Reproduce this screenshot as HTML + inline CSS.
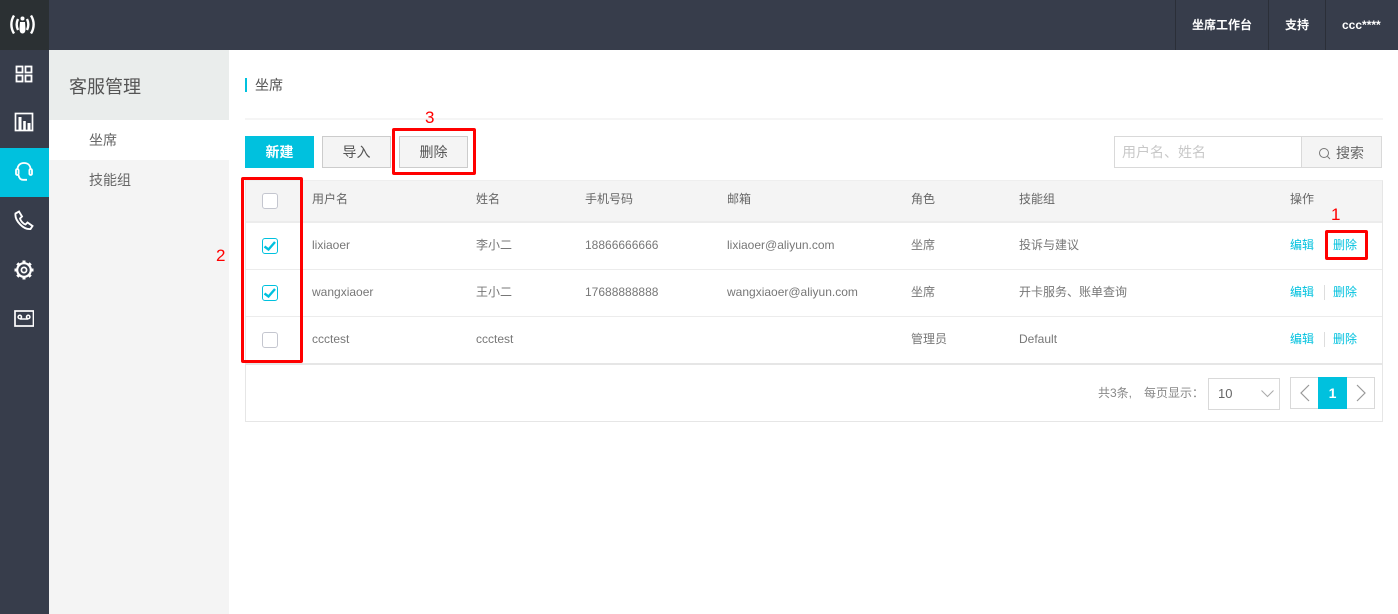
<!DOCTYPE html>
<html lang="zh">
<head>
<meta charset="utf-8">
<title>坐席</title>
<style>
html,body{margin:0;padding:0;width:1398px;height:614px;overflow:hidden;background:#fff}
body{font-family:"Liberation Sans","Noto Sans CJK SC",sans-serif;font-size:12px;color:#666;position:relative}
.a{position:absolute;box-sizing:border-box}
.t{position:absolute;white-space:nowrap;line-height:16px}
.cb{position:absolute;left:262px;width:16px;height:16px;border:1px solid #c4c6cf;border-radius:3px;background:#fff;box-sizing:border-box}
.cb.on{border-color:#00c1de}
.cb svg{position:absolute;left:0;top:0}
.lnk{color:#00c1de}
.red{position:absolute;box-sizing:border-box;border:3px solid #f00;border-radius:2px}
.num{position:absolute;color:#f00;font-size:17px;line-height:18px}
svg{display:block}
</style>
</head>
<body>
<!-- top bar -->
<div class="a" style="left:0;top:0;width:1398px;height:50px;background:#373d4b"></div>
<div class="a" style="left:0;top:0;width:49px;height:50px;background:#2b3033"></div>
<svg class="a" style="left:9px;top:13px" width="27" height="23" viewBox="0 0 27 23" fill="none" stroke="#fff" stroke-width="2.400">
<path d="M5 2.500C1.500 8 1.500 15 5 20.500M22 2.500C25.500 8 25.500 15 22 20.500"/>
<path d="M9 6C7.300 9.500 7.300 13.500 9 17M18 6C19.700 9.500 19.700 13.500 18 17"/>
<circle cx="13.500" cy="5.500" r="2" fill="#fff" stroke="none"/>
<path d="M11 9H16L16.500 16C16.500 18.500 15.500 20.500 13.500 20.500C11.500 20.500 10.500 18.500 10.500 16Z" fill="#fff" stroke="none"/>
</svg>
<div class="a" style="left:1175px;top:0;width:1px;height:50px;background:#2b2f38"></div>
<div class="a" style="left:1268px;top:0;width:1px;height:50px;background:#2b2f38"></div>
<div class="a" style="left:1325px;top:0;width:1px;height:50px;background:#2b2f38"></div>
<div class="t" style="left:1192px;top:17px;color:#fff;font-weight:700">坐席工作台</div>
<div class="t" style="left:1285px;top:17px;color:#fff;font-weight:700">支持</div>
<div class="t" style="left:1342px;top:17px;color:#fff;font-weight:700">ccc****</div>

<!-- icon rail -->
<div class="a" style="left:0;top:50px;width:49px;height:564px;background:#373d4b"></div>
<div class="a" style="left:0;top:148px;width:49px;height:49px;background:#00c1de"></div>
<svg class="a" style="left:15px;top:65px" width="18" height="18" viewBox="0 0 18 18" fill="none" stroke="#fff" stroke-width="1.800">
<rect x="1.500" y="1.500" width="6" height="6"/><rect x="10.500" y="1.500" width="6" height="6"/><rect x="1.500" y="10.500" width="6" height="6"/><rect x="10.500" y="10.500" width="6" height="6"/>
</svg>
<svg class="a" style="left:14px;top:112px" width="20" height="20" viewBox="0 0 20 20" fill="none" stroke="#fff">
<rect x="1.500" y="1.500" width="17" height="17" stroke-width="1.700"/>
<path d="M6 5V18" stroke-width="3"/><path d="M10.500 9V18" stroke-width="2.600"/><path d="M15 11V18" stroke-width="3"/>
</svg>
<svg class="a" style="left:14px;top:161px" width="20" height="22" viewBox="0 0 20 22" fill="none" stroke="#fff" stroke-width="1.800">
<path d="M3.500 8.500C3.500 4.500 6 2 10 2S16.500 4.500 16.500 8.500"/>
<rect x="2" y="8" width="2.600" height="6" rx="1.300"/><rect x="15.400" y="8" width="2.600" height="6" rx="1.300"/>
<path d="M4.500 14C5 17 6.500 18.800 9 18.800H13"/>
</svg>
<svg class="a" style="left:14px;top:210px" width="20" height="21" viewBox="0 0 20 21" fill="none" stroke="#fff" stroke-width="1.900">
<path d="M1.500 3.500L5 1.500L8 6.500L6 8.500C6.500 11 9.500 14 11.500 14.500L13.500 12.500L18.500 16L16.500 19C10 20 0.500 11 1.500 3.500Z"/>
</svg>
<svg class="a" style="left:14px;top:260px" width="20" height="20" viewBox="0 0 20 20" fill="none" stroke="#fff">
<circle cx="10" cy="10" r="6.800" stroke-width="2.200"/>
<circle cx="10" cy="10" r="2.600" stroke-width="1.700"/>
<path d="M10 0.500V3.500M10 16.500V19.500M0.500 10H3.500M16.500 10H19.500M3.300 3.300L5.400 5.400M14.600 14.600L16.700 16.700M3.300 16.700L5.400 14.600M14.600 5.400L16.700 3.300" stroke-width="3"/>
</svg>
<svg class="a" style="left:14px;top:310px" width="20" height="17" viewBox="0 0 20 17" fill="none" stroke="#fff">
<rect x="1" y="1" width="18.500" height="15" stroke-width="1.700"/>
<circle cx="5.800" cy="7" r="1.700" stroke-width="1.500"/><circle cx="14.200" cy="7" r="1.700" stroke-width="1.500"/>
<path d="M6 9H14" stroke-width="1.500"/>
</svg>

<!-- secondary nav -->
<div class="a" style="left:49px;top:50px;width:180px;height:564px;background:#f4f4f4"></div>
<div class="a" style="left:49px;top:50px;width:180px;height:70px;background:#eaedec"></div>
<div class="a" style="left:49px;top:120px;width:180px;height:40px;background:#fff"></div>
<div class="t" style="left:69px;top:75px;font-size:18px;line-height:24px;color:#555">客服管理</div>
<div class="t" style="left:89px;top:132px;font-size:14px;color:#666">坐席</div>
<div class="t" style="left:89px;top:172px;font-size:14px;color:#666">技能组</div>

<!-- breadcrumb -->
<div class="a" style="left:245px;top:78px;width:2px;height:14px;background:#00c1de"></div>
<div class="t" style="left:255px;top:77px;font-size:14px;color:#555">坐席</div>
<div class="a" style="left:245px;top:118px;width:1138px;height:2px;background:#f5f5f5"></div>

<!-- toolbar -->
<div class="a" style="left:245px;top:136px;width:69px;height:32px;background:#00c1de;color:#fff;font-size:14px;font-weight:700;line-height:32px;text-align:center">新建</div>
<div class="a" style="left:322px;top:136px;width:69px;height:32px;background:#f4f4f4;border:1px solid #ccc;color:#555;font-size:14px;line-height:30px;text-align:center">导入</div>
<div class="a" style="left:399px;top:136px;width:69px;height:32px;background:#f4f4f4;border:1px solid #ccc;color:#555;font-size:14px;line-height:30px;text-align:center">删除</div>

<!-- search -->
<div class="a" style="left:1114px;top:136px;width:188px;height:32px;background:#fff;border:1px solid #d9d9d9;border-right:0"></div>
<div class="t" style="left:1122px;top:144px;font-size:14px;color:#c8c8c8">用户名、姓名</div>
<div class="a" style="left:1301px;top:136px;width:81px;height:32px;background:#f4f4f4;border:1px solid #d9d9d9"></div>
<svg class="a" style="left:1318px;top:147px" width="13" height="13" viewBox="0 0 13 13" fill="none" stroke="#777" stroke-width="1">
<circle cx="6" cy="6" r="4.500"/><path d="M9.500 9.500L12 12"/>
</svg>
<div class="t" style="left:1336px;top:145px;font-size:14px;color:#666">搜索</div>

<!-- table -->
<div class="a" style="left:245px;top:180px;width:1138px;height:242px;border:1px solid #e6e6e6;border-top:1px solid #eee;background:#fff"></div>
<div class="a" style="left:246px;top:181px;width:1136px;height:41px;background:#f4f4f4"></div>
<div class="a" style="left:246px;top:221px;width:1136px;height:2px;background:#ececec"></div>
<div class="a" style="left:246px;top:269px;width:1136px;height:1px;background:#ececec"></div>
<div class="a" style="left:246px;top:316px;width:1136px;height:1px;background:#ececec"></div>
<div class="a" style="left:246px;top:363px;width:1136px;height:2px;background:#e6e6e6"></div>

<div class="cb" style="top:193px"></div>
<div class="cb on" style="top:238px"><svg width="14" height="14" viewBox="0 0 14 14" fill="none" stroke="#00c1de" stroke-width="2.400"><path d="M1.500 7.500L5.500 10.500L12 3"/></svg></div>
<div class="cb on" style="top:285px"><svg width="14" height="14" viewBox="0 0 14 14" fill="none" stroke="#00c1de" stroke-width="2.400"><path d="M1.500 7.500L5.500 10.500L12 3"/></svg></div>
<div class="cb" style="top:332px"></div>

<div class="t" style="left:312px;top:191px">用户名</div>
<div class="t" style="left:476px;top:191px">姓名</div>
<div class="t" style="left:585px;top:191px">手机号码</div>
<div class="t" style="left:727px;top:191px">邮箱</div>
<div class="t" style="left:911px;top:191px">角色</div>
<div class="t" style="left:1019px;top:191px">技能组</div>
<div class="t" style="left:1290px;top:191px">操作</div>

<div class="t" style="left:312px;top:237px;color:#777">lixiaoer</div>
<div class="t" style="left:476px;top:237px;color:#777">李小二</div>
<div class="t" style="left:585px;top:237px;color:#777">18866666666</div>
<div class="t" style="left:727px;top:237px;color:#777">lixiaoer@aliyun.com</div>
<div class="t" style="left:911px;top:237px;color:#777">坐席</div>
<div class="t" style="left:1019px;top:237px;color:#777">投诉与建议</div>
<div class="t lnk" style="left:1290px;top:237px">编辑</div>
<div class="t lnk" style="left:1333px;top:237px">删除</div>

<div class="t" style="left:312px;top:284px;color:#777">wangxiaoer</div>
<div class="t" style="left:476px;top:284px;color:#777">王小二</div>
<div class="t" style="left:585px;top:284px;color:#777">17688888888</div>
<div class="t" style="left:727px;top:284px;color:#777">wangxiaoer@aliyun.com</div>
<div class="t" style="left:911px;top:284px;color:#777">坐席</div>
<div class="t" style="left:1019px;top:284px;color:#777">开卡服务、账单查询</div>
<div class="t lnk" style="left:1290px;top:284px">编辑</div>
<div class="a" style="left:1324px;top:285px;width:1px;height:15px;background:#ddd"></div>
<div class="t lnk" style="left:1333px;top:284px">删除</div>

<div class="t" style="left:312px;top:331px;color:#777">ccctest</div>
<div class="t" style="left:476px;top:331px;color:#777">ccctest</div>
<div class="t" style="left:911px;top:331px;color:#777">管理员</div>
<div class="t" style="left:1019px;top:331px;color:#777">Default</div>
<div class="t lnk" style="left:1290px;top:331px">编辑</div>
<div class="a" style="left:1324px;top:332px;width:1px;height:15px;background:#ddd"></div>
<div class="t lnk" style="left:1333px;top:331px">删除</div>

<!-- pagination -->
<div class="t" style="left:1098px;top:385px;color:#888">共3条,</div>
<div class="t" style="left:1144px;top:385px;color:#888">每页显示：</div>
<div class="a" style="left:1208px;top:378px;width:72px;height:32px;border:1px solid #d9d9d9;background:#fff"></div>
<div class="t" style="left:1218px;top:386px;color:#666;font-size:13px">10</div>
<svg class="a" style="left:1261px;top:390px" width="13" height="8" viewBox="0 0 13 8" fill="none" stroke="#aaa" stroke-width="1"><path d="M0.500 0.500L6.500 6.500L12.500 0.500"/></svg>
<div class="a" style="left:1290px;top:377px;width:85px;height:32px;border:1px solid #d9d9d9;background:#fff"></div>
<div class="a" style="left:1318px;top:377px;width:29px;height:32px;background:#00c1de;color:#fff;font-size:14px;font-weight:700;line-height:32px;text-align:center">1</div>
<svg class="a" style="left:1299px;top:383px" width="12" height="20" viewBox="0 0 12 20" fill="none" stroke="#999" stroke-width="1.200"><path d="M10 2L2 10L10 18"/></svg>
<svg class="a" style="left:1355px;top:383px" width="12" height="20" viewBox="0 0 12 20" fill="none" stroke="#999" stroke-width="1.200"><path d="M2 2L10 10L2 18"/></svg>

<!-- red annotations -->
<div class="red" style="left:392px;top:128px;width:84px;height:47px"></div>
<div class="red" style="left:241px;top:177px;width:62px;height:186px"></div>
<div class="red" style="left:1325px;top:230px;width:43px;height:30px"></div>
<div class="num" style="left:425px;top:109px">3</div>
<div class="num" style="left:216px;top:247px">2</div>
<div class="num" style="left:1331px;top:206px">1</div>
</body>
</html>
